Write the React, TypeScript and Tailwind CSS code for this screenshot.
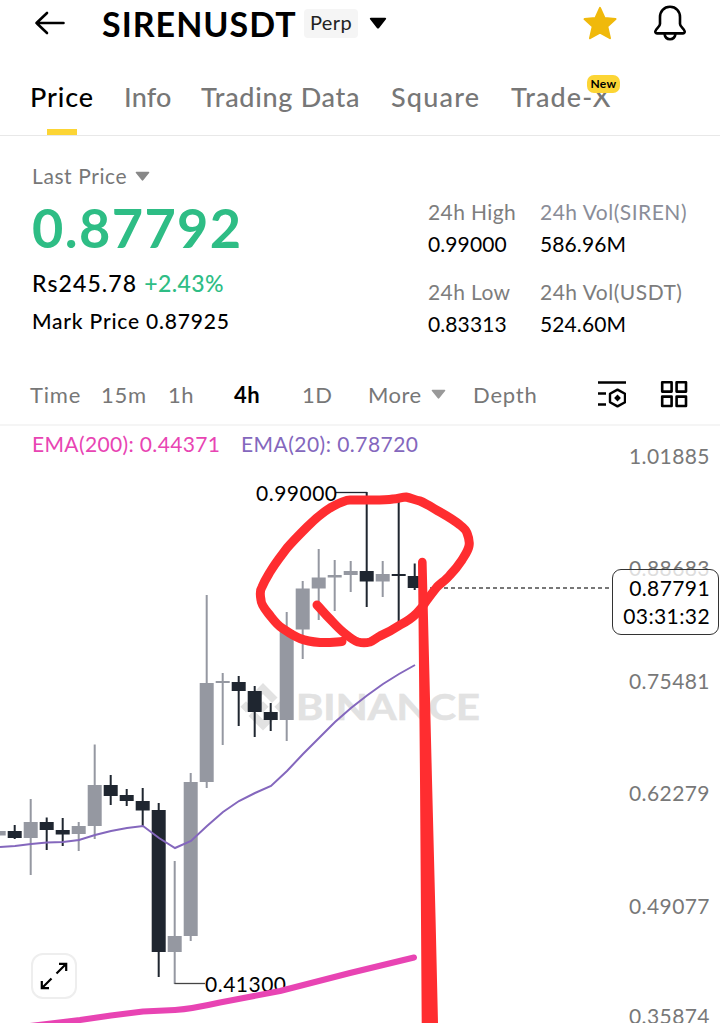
import clsx from 'clsx';

interface Candle {
    up: boolean;
    top: number;
    bottom: number;
    high: number;
    low: number;
}

const c = (up: boolean, top: number, bottom: number, high: number, low: number): Candle => ({ up, top, bottom, high, low });

const candles: Candle[] = [
    c(true, 831, 835.5, 831, 835.5),
    c(false, 831, 838, 825, 839),
    c(true, 822, 838, 799, 875),
    c(false, 822, 830, 817.5, 850),
    c(false, 830, 834.5, 818, 846),
    c(true, 826, 834, 822, 851),
    c(true, 785, 826, 744.5, 839),
    c(false, 785, 796, 775, 805),
    c(false, 795, 801, 789, 806),
    c(false, 801, 810.5, 788, 827),
    c(false, 810, 952, 803, 977),
    c(true, 936, 952, 861, 984),
    c(true, 782, 936, 773, 941),
    c(true, 683, 782, 595, 788),
    c(true, 681, 683, 673, 745),
    c(false, 682, 691, 676, 726),
    c(false, 691, 712, 686, 737),
    c(false, 712, 720, 703, 731),
    c(true, 630, 720, 612, 741),
    c(true, 588.5, 629.5, 581, 659),
    c(true, 577.5, 588.5, 549, 620),
    c(true, 575, 577.5, 560, 611),
    c(true, 571, 575, 561, 592),
    c(false, 571, 581.5, 492, 607),
    c(true, 574, 581.5, 561, 597),
    c(false, 574, 576, 502, 625),
    c(false, 576, 588, 563.5, 590),
];

const axis = [
    { y: 464, label: '1.01885' },
    { y: 576, label: '0.88683' },
    { y: 689, label: '0.75481' },
    { y: 801, label: '0.62279' },
    { y: 914, label: '0.49077' },
    { y: 1024, label: '0.35874' },
];

const tabs = [
    { label: 'Price', className: 'w-[94px] tracking-[0.9px]' },
    { label: 'Info', className: 'w-[77px] tracking-[0.2px]' },
    { label: 'Trading Data', className: 'w-[190px] tracking-[0.7px]' },
    { label: 'Square', className: 'w-[120px] tracking-[1.2px]' },
    { label: 'Trade-X', className: 'tracking-[1.1px]' },
];

function Caret({ className }: { className?: string }) {
    return (
        <svg viewBox="0 0 18 12" className={className} fill="currentColor">
            <path d="M1.8 0.8h14.4a.9.9 0 0 1 .7 1.5l-6.8 8.6a1.4 1.4 0 0 1-2.2 0L1.1 2.3a.9.9 0 0 1 .7-1.5z" />
        </svg>
    );
}

function Header() {
    return (
        <div className="h-[46px] flex items-center pl-[34px] pr-[33px]">
            <svg viewBox="0 0 32 24" className="w-8 h-6 mr-9" fill="none" stroke="#000" strokeWidth="2.6" strokeLinecap="round" strokeLinejoin="round">
                <path d="M2.5 12H29.5M13 2L2.5 12L13 22" />
            </svg>
            <h1 className="w-[193px] text-[34px] leading-[45px] font-bold whitespace-nowrap tracking-[1px]">SIRENUSDT</h1>
            <span className="ml-[9px] w-[54px] h-[29px] rounded-[4px] bg-[#f5f5f5] text-[20px] leading-[27px] text-center text-[#222] tracking-[0.4px]">Perp</span>
            <Caret className="w-[18px] h-3 ml-[11px]" />
            <div className="ml-auto flex items-center">
                <svg viewBox="0 0 34 34" className="w-[34px] h-[34px]" fill="#f0b90b" stroke="#f0b90b" strokeWidth="2" strokeLinejoin="round">
                    <path d="M17 1.8l4.500 10.100 11 1.200-8.200 7.500 2.700 11.600L17 26.600 7 32.200l2.700-11.600-8.200-7.500 11-1.200z" />
                </svg>
                <svg viewBox="0 0 34 36" className="w-[34px] h-9 ml-9" fill="none" stroke="#000" strokeWidth="2.6" strokeLinejoin="round">
                    <path d="M17 1.800C10.800 1.800 7 6.400 7 12V19C7 22 2.500 24 2.300 26.400C2.200 27.800 3 28.400 4.200 28.400H29.800C31 28.400 31.800 27.800 31.700 26.400C31.500 24 27 22 27 19V12C27 6.400 23.200 1.800 17 1.800Z" />
                    <path d="M11.500 29C12 32.200 14 34.200 17 34.200S22 32.200 22.500 29" />
                </svg>
            </div>
        </div>
    );
}

function Tabs() {
    return (
        <div className="h-[90px] pt-[30px] pl-[30px] flex items-start border-b border-[#e8e8e8] text-[27px] leading-[42px] font-medium">
            {tabs.map((t, i) => (
                <div key={t.label} className={clsx('relative h-[59px] whitespace-nowrap', t.className, i === 0 ? 'text-black' : 'text-[#777]')}>
                    {t.label}
                    {i === 0 && <div className="absolute left-[17px] bottom-0 w-[30px] h-[6px] bg-[#fcd535]" />}
                    {i === 4 && (
                        <span className="absolute left-[76px] -top-[1px] w-[33px] h-[18px] rounded-[7px] bg-[#fcd535] text-black text-[12px] leading-[18px] font-bold text-center tracking-[0.4px]">New</span>
                    )}
                </div>
            ))}
        </div>
    );
}

function Stat({ label, value, className }: { label: string; value: string; className?: string }) {
    return (
        <div className="h-20 text-[21px] leading-8 whitespace-nowrap tracking-[0.4px]">
            <div className={clsx('text-[#7d7d7d]', className)}>{label}</div>
            <div className="tracking-[0.1px]">{value}</div>
        </div>
    );
}

function Summary() {
    return (
        <div className="h-[230px] flex pl-8 pt-6">
            <div className="w-[396px] whitespace-nowrap">
                <div className="flex items-center h-8 text-[21px] text-[#777] tracking-[0.6px]">
                    Last Price
                    <Caret className="w-[15px] h-[10px] ml-2 text-[#888]" />
                </div>
                <div className="h-[71px] text-[54px] leading-[72px] font-bold text-[#2ebd85] tracking-[1.4px]">0.87792</div>
                <div className="h-10 text-[23px] leading-10 font-medium tracking-[1.1px]">
                    Rs245.78<span className="ml-[7px] text-[#2ebd85] tracking-[0.4px]">+2.43%</span>
                </div>
                <div className="h-9 text-[21px] leading-9 font-medium tracking-[0.8px]">Mark Price 0.87925</div>
            </div>
            <div className="w-[112px] pt-9">
                <Stat label="24h High" value="0.99000" />
                <Stat label="24h Low" value="0.83313" />
            </div>
            <div className="pt-9">
                <Stat label="24h Vol(SIREN)" value="586.96M" className="text-[#8a8d98] tracking-[0.5px]" />
                <Stat label="24h Vol(USDT)" value="524.60M" className="tracking-[0.5px]" />
            </div>
        </div>
    );
}

function Intervals() {
    return (
        <div className="h-[60px] flex items-center pl-[30px] pr-8 pb-[2px] text-[22px] text-[#777] tracking-[0.5px] whitespace-nowrap border-b-2 border-[#f5f5f5]">
            <span className="w-[71px] tracking-[0.8px]">Time</span>
            <span className="w-[67px] tracking-[0.8px]">15m</span>
            <span className="w-[66px]">1h</span>
            <span className="w-[68px] font-bold text-black">4h</span>
            <span className="w-[66px]">1D</span>
            <span className="w-[105px] flex items-center">
                More
                <Caret className="w-[15px] h-[10px] ml-[9px] text-[#999]" />
            </span>
            <span className="tracking-[0.8px]">Depth</span>
            <svg viewBox="0 0 28 28" className="w-7 h-7 ml-auto" fill="none" stroke="#000" strokeWidth="2.4">
                <path d="M0 2.500H28M0 13.500H8M0 24.500H8" />
                <path d="M19.500 9.600L27 13.800V22.200L19.500 26.400L12 22.200V13.800Z" strokeLinejoin="round" />
                <path d="M19.500 14.600L22.900 18L19.500 21.400L16.100 18Z" fill="#000" stroke="none" />
            </svg>
            <svg viewBox="0 0 28 28" className="w-7 h-7 ml-[34px]" fill="none" stroke="#000" strokeWidth="2.6" strokeLinejoin="round">
                <rect x="2.200" y="2.200" width="9.400" height="9.400" />
                <rect x="16.600" y="2.200" width="9.400" height="9.400" />
                <rect x="2.200" y="16.600" width="9.400" height="9.400" />
                <rect x="16.600" y="16.600" width="9.400" height="9.400" />
            </svg>
        </div>
    );
}

function Chart() {
    return (
        <div className="relative h-[597px]">
            <svg viewBox="0 426 720 597" className="block w-[720px] h-[597px]" fontSize="21">
                {/* watermark */}
                <g fill="#e2e2e2">
                    <path d="M263 683L277.500 697.500L272 703L263 694L254 703L248.500 697.500Z" />
                    <path d="M263 730.500L277.500 716L272 710.500L263 719.500L254 710.500L248.500 716Z" />
                    <path d="M263 701.200L268.600 706.800L263 712.400L257.400 706.800Z" />
                    <path d="M246 701.200L251.600 706.800L246 712.400L240.400 706.800Z" />
                    <path d="M280 701.200L285.600 706.800L280 712.400L274.400 706.800Z" />
                    <text x="296" y="720" fontSize="36" fontWeight="700" textLength="184" lengthAdjust="spacingAndGlyphs" stroke="#e2e2e2" strokeWidth="0.6">BINANCE</text>
                </g>

                <g fill="#787878">
                    {axis.map((a) => (
                        <text key={a.label} x="629" y={a.y} textLength="80.500">{a.label}</text>
                    ))}
                </g>
                <text x="32" y="452" fill="#e844b3" textLength="188">EMA(200): 0.44371</text>
                <text x="241" y="452" fill="#8467bd" textLength="177">EMA(20): 0.78720</text>

                {candles.map((k, i) => {
                    const x = 14.700 + (i - 1) * 16;
                    return (
                        <g key={i} fill={k.up ? '#9598a1' : '#1f2630'}>
                            <rect x={x - 1} y={k.high} width="2" height={k.low - k.high} />
                            <rect x={x - 7} y={k.top} width="14" height={k.bottom - k.top} />
                        </g>
                    );
                })}

                <path d="M336 492.500H367" stroke="#1f2630" strokeWidth="1.300" />
                <text x="256" y="501" textLength="81">0.99000</text>
                <path d="M174.500 983.500H205" stroke="#444" strokeWidth="1.300" />
                <text x="205" y="992" textLength="81">0.41300</text>

                <polyline
                    fill="none"
                    stroke="#8467bd"
                    strokeWidth="2"
                    points="0,847 15,846 31,844 47,842.500 63,842 79,840 95,835 111,831 127,828 143,826 159,838 175,848 191,841 207,826 223,812 239,801 255,793 271,786 287,771 303,754 319,738 335,722 351,708 367,695.500 383,684 399,674 415,665"
                />
                <path
                    d="M30 1026L80 1020L111 1015.500L143 1011.500L175 1010C190 1009 200 1007 220 1002.500L280 991L350 973L414 957.500"
                    fill="none"
                    stroke="#e844b3"
                    strokeWidth="6"
                    strokeLinecap="round"
                    strokeLinejoin="round"
                />

                <path d="M430 588H612" stroke="#777" strokeWidth="1.800" strokeDasharray="4 3" />

                {/* hand drawn marks */}
                <path
                    d="M342 641.500C335 642 328 643 320 642.500C313 642 306 641 300 638.500C293 636 288 632 282 628C276 624 273 619 268 613C264 608 261 604 261 600C260 595 260 590 262 587C265 580 267 577 270 572C276 562 281 556 287 548C293 541 300 534 307 527C315 519 322 513 330 508C337 504 344 500 350 500H373C380 500 387 500 393 499C398 499 402 497 406 497C411 498 415 500 420 501C427 504 433 508 440 512C447 516 454 520 460 525C464 528 466 530 467 533C469 538 470 541 469 546C468 551 465 555 462 560C458 566 455 570 450 575C446 580 441 583 437 587C433 592 430 596 427 600C424 605 421 609 417 613C412 618 406 622 400 625C394 629 387 633 380 636C376 638 373 641 370 642C366 643 362 643 358 642C352 640 347 635 343 632C337 627 333 622 328 617C324 613 321 609 317 605"
                    fill="none"
                    stroke="#ff2d30"
                    strokeWidth="9"
                    strokeLinecap="round"
                    strokeLinejoin="round"
                />
                <path d="M418 562A4.300 4.300 0 0 1 426.600 562L429.300 670L432 780L435.600 920L438 1023H421.700L421 920L420 780L419 670Z" fill="#ff2d30" />
            </svg>

            <div className="absolute left-[612px] top-[143px] w-[107px] h-[66px] rounded-[9px] border-[1.5px] border-[#333] bg-white/75 pr-[8px] text-[21px] leading-7 pt-[4px] text-right tracking-[0.4px]">
                <div>0.87791</div>
                <div>03:31:32</div>
            </div>
            <button className="absolute left-[31px] top-[527px] w-[46px] h-[46px] rounded-xl border-2 border-[#eee] bg-white flex items-center justify-center">
                <svg viewBox="0 0 28 28" className="w-7 h-7" fill="none" stroke="#000" strokeWidth="2.200">
                    <path d="M16.500 11.500L26.500 1.500M19 1.800H26.200V9M11.500 16.500L1.500 26.500M1.800 19V26.200H9" />
                </svg>
            </button>
        </div>
    );
}

export default function App() {
    return (
        <div className="w-[720px] h-[1023px] overflow-hidden bg-white text-black font-['Lato',sans-serif]">
            <Header />
            <Tabs />
            <Summary />
            <Intervals />
            <Chart />
        </div>
    );
}
